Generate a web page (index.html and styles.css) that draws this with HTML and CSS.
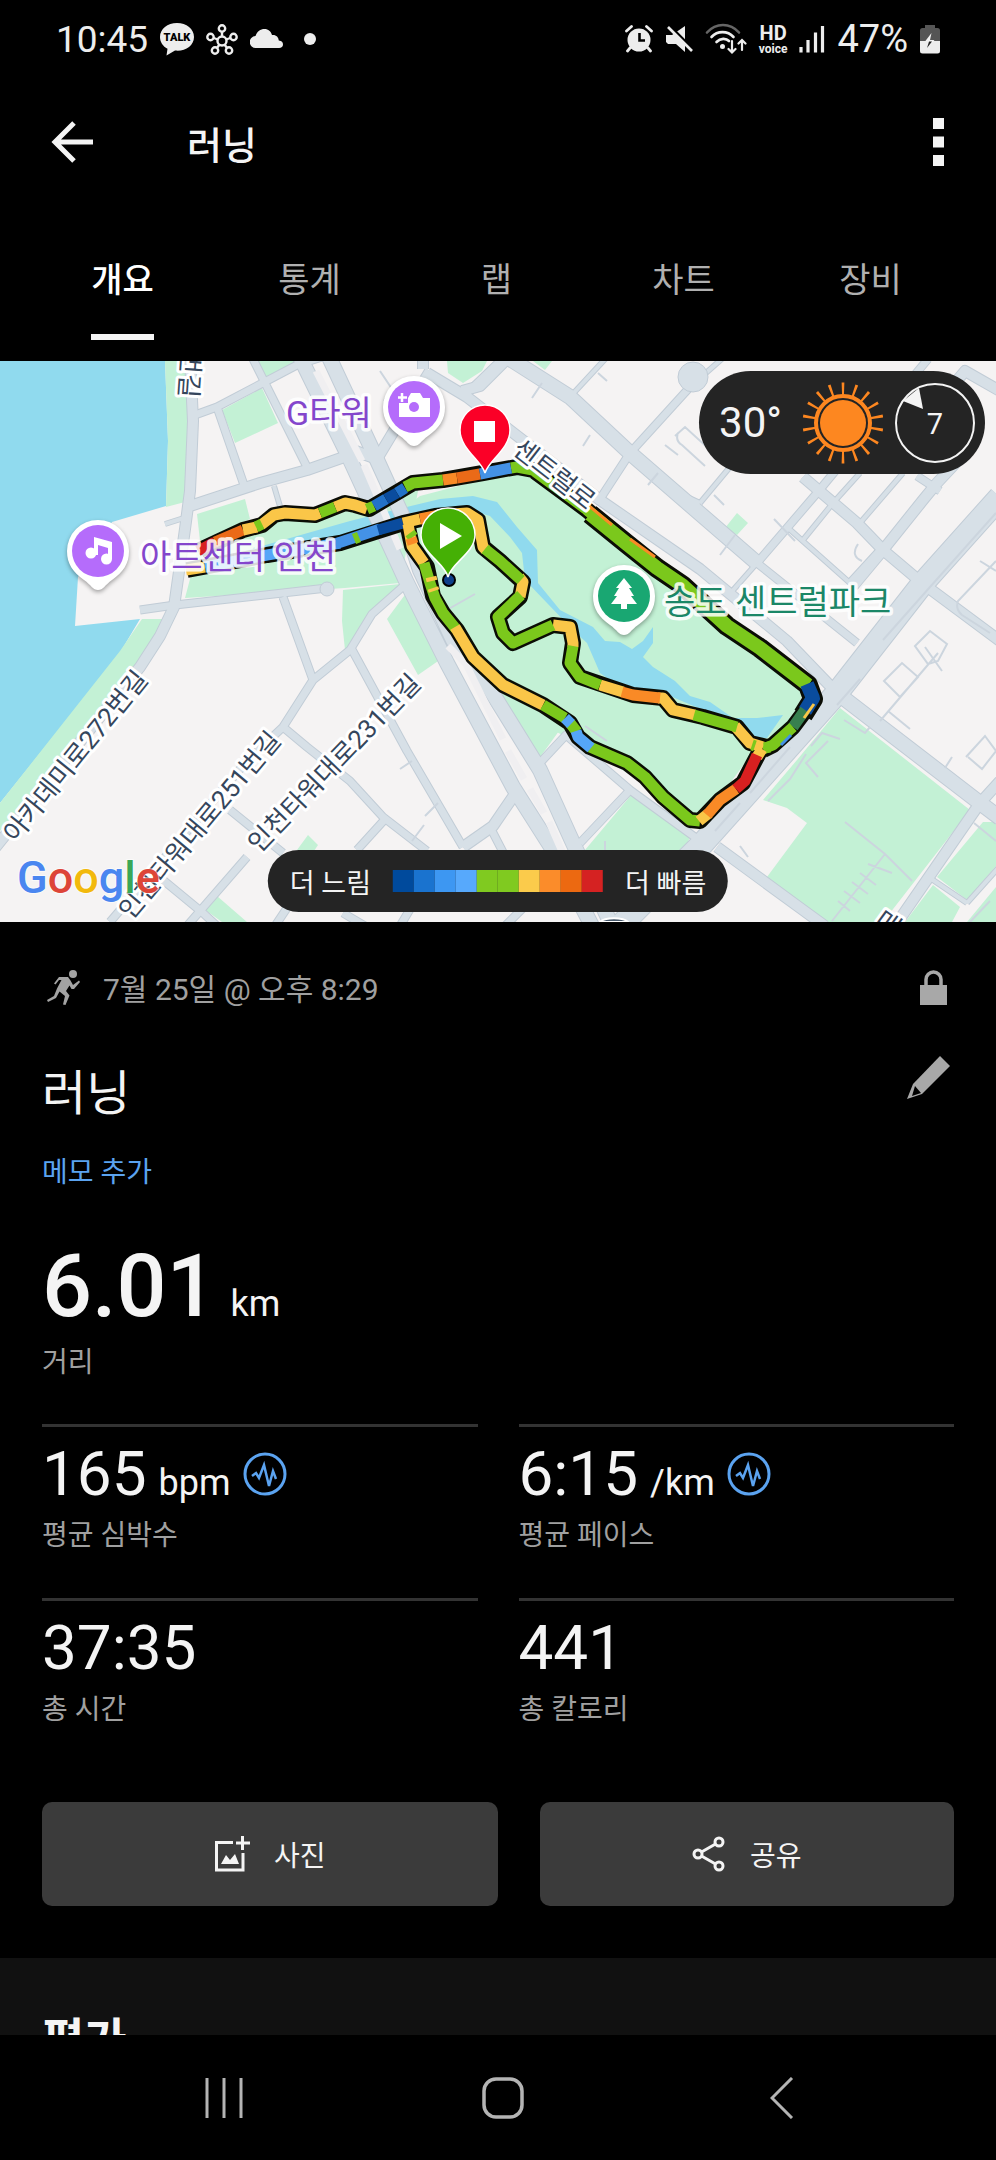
FILE: index.html
```html
<!DOCTYPE html>
<html lang="ko">
<head>
    <meta charset="UTF-8">
    <meta name="viewport" content="width=device-width, initial-scale=1.0">
    <title>러닝</title>
    <link rel="stylesheet" href="styles.css">
</head>
<body>
    <div class="status-bar">
        <div class="status-left">
            <span class="clock">10:45</span>
            <svg class="talk-icon" width="34" height="33" viewBox="0 0 34 33">
                <path d="M17 0C7.500 0 0 6 0 14c0 5 3 9.500 7.500 11.800L6.500 32.500l8.500-5c9.800 1.200 19-4.500 19-13.500C34 6 26.500 0 17 0z" fill="#ededed"/>
                <text x="17" y="18" text-anchor="middle">TALK</text>
            </svg>
            <svg width="32" height="31" viewBox="0 0 32 31" fill="none" stroke="#ededed" stroke-width="2.400">
                <circle cx="16" cy="17" r="4.500"/><circle cx="16" cy="4.500" r="3.200"/><circle cx="4.500" cy="13" r="3.200"/><circle cx="27.500" cy="13" r="3.200"/><circle cx="9" cy="26.500" r="3.200"/><circle cx="23" cy="26.500" r="3.200"/>
                <path d="M16 8v4.500M7.800 14l4 1.500M24.200 14l-4 1.500M11 24l2.500-3.500M21 24l-2.500-3.500"/>
            </svg>
            <svg width="34" height="20" viewBox="0 0 34 20"><path d="M6 19a6 6 0 0 1-.5-12C7 2.500 10.500 0 14.500 0c3.800 0 6.500 2.500 7.500 6 4-.5 6.500 2 6.800 5.500 3 .3 4.200 2 4.200 4S31.500 19 29 19z" fill="#ededed"/></svg>
            <span class="dot"></span>
        </div>
        <div class="status-right">
            <svg width="28" height="28" viewBox="0 0 28 28">
                <circle cx="14" cy="15" r="11.500" fill="#ededed"/>
                <path d="M1.500 6l5-4.500M26.500 6l-5-4.500M5 23l-2.500 3M23 23l2.500 3" stroke="#ededed" stroke-width="2.800" stroke-linecap="round"/>
                <path d="M14.500 8v7.500h5.500" fill="none" stroke="#000" stroke-width="2.600"/>
            </svg>
            <svg width="28" height="28" viewBox="0 0 28 28">
                <path d="M1 10h6l13-9v26L11 19H3l-2-2z" fill="#ededed"/>
                <path d="M1 -2l28 28" stroke="#000" stroke-width="4"/>
                <path d="M3 2l24 24" stroke="#ededed" stroke-width="2.600"/>
            </svg>
            <svg width="42" height="32" viewBox="0 0 42 32" fill="none" stroke="#ededed" stroke-width="2.600" stroke-linecap="round">
                <path d="M2 9.500C11-.5 25-.5 34 9.500" stroke="#666"/>
                <path d="M6.500 14c6-6.500 16-6.500 22 0M11.500 19c4-4 9.500-4 12.500-1"/>
                <circle cx="17.500" cy="23.500" r="1.200" fill="#ededed"/>
                <path d="M27 18v11M23.500 26l3.500 3.500 3.500-3.500M37 27V17M33.500 20.500l3.500-3.500 3.500 3.500" stroke-width="2.200"/>
            </svg>
            <span class="hd"><b>HD</b><i>voice</i></span>
            <svg width="26" height="28" viewBox="0 0 26 28" stroke="#ededed" stroke-width="3.200"><path d="M2 22v5.500M9 15v12.500M16.500 7.500v20M23.500 1v26.500"/></svg>
            <span class="battery-text">47%</span>
            <svg width="20" height="29" viewBox="0 0 20 29">
                <path d="M5 0h10v3h2.500A2.500 2.500 0 0 1 20 5.500V17H0V5.500A2.500 2.500 0 0 1 2.500 3H5z" fill="#555"/>
                <path d="M0 16h20v10a2.500 2.500 0 0 1-2.500 2.500h-15A2.500 2.500 0 0 1 0 26z" fill="#ededed"/>
                <path d="M11.500 8L5 16.500h4L7 23l7.500-8h-4.500z" fill="#f4f4f4"/>
                <path d="M12 16.500L7 23l2-6.500z" fill="#222"/>
            </svg>
        </div>
    </div>

    <header class="app-bar">
        <button class="icon-button" aria-label="뒤로">
            <svg width="43" height="42" viewBox="0 0 43 42" fill="none" stroke="#f4f4f4" stroke-width="5"><path d="M23 2L4 21l19 19M4 21h38"/></svg>
        </button>
        <h1>러닝</h1>
        <button class="icon-button" aria-label="메뉴">
            <svg width="12" height="48" viewBox="0 0 12 48" fill="#f4f4f4"><path d="M0 0h11v11H0zM0 18.500h11v11H0zM0 37h11v11H0z"/></svg>
        </button>
    </header>

    <nav class="tabs">
        <a href="#" class="active">개요</a>
        <a href="#">통계</a>
        <a href="#">랩</a>
        <a href="#">차트</a>
        <a href="#">장비</a>
    </nav>

    <main>
        <div class="map">
            <svg class="map-canvas" viewBox="0 0 996 561">
                <defs>
                    <g id="roads">
                        <g class="w5">
                            <path d="M570 36L607 -4M727 236L757 202M700 142L730 106M787 166L850 222M833 142L803 179M833 142L860 112M860 162L903 112M803 116L833 144M670 128L700 142M930 517L967 542M967 542L1000 505M274 125L282 152M165 163L187 156M467 30L500 -2M690 26L724 -4"/>
                        </g>
                        <g class="w8">
                            <path d="M195 54L217 46 297 4 322 -4M217 46L245 127M253 -2L307 106M140 249L175 244 327 227M283 236L313 319 350 289 372 253 407 222M313 319L283 366 247 400 110 561M283 366L307 386 350 420 383 456 427 490M230 449L283 492M247 496L187 565M163 519L203 552 217 565M350 285L407 390 463 486M387 456L357 489M490 466L505 495M580 482L630 429M538 404L566 374 630 429 703 482M757 202L857 282M757 202L817 132 928 -2M630 92L600 138M630 92L690 26 705 8M850 222L883 186M917 115L940 130M295 535L275 565M343 552L365 565M415 540L400 565M525 545L505 565"/>
                        </g>
                        <g class="w11">
                            <path d="M190 -4L193 60 190 130 185 168 174 246 160 275 140 306 -5 487M190 145L260 122 307 109 347 95M427 12L467 36 600 139 700 208 787 280 837 332M377 98L350 88M377 98L430 10M423 -4V8M463 486L493 465 517 430M803 116L857 162 883 189 922 222 1000 280M883 189L923 139 937 122 965 92M853 225L883 189M717 486L803 549 825 565M980 442L895 565M980 442L1000 420M940 40L965 10 1000 30M505 0L480 25 462 30"/>
                        </g>
                        <g class="w15">
                            <path d="M300 -4L347 92 407 222 447 302 513 426 553 489 592 565M329 -4L377 99 403 156 420 209 453 279 480 312 540 409 573 482 612 565M507 -4L570 36 630 92 757 202M837 332L980 442 1000 457"/>
                        </g>
                        <g class="w22">
                            <path d="M620 565L703 482 837 332 923 222 1000 136"/>
                        </g>
                    </g>
                </defs>
                <rect width="996" height="561" fill="#f5f3f3"/>

                <!-- water -->
                <path class="water" d="M0 0H165L168 80 166 145 112 161 78 216 75 265 140 258 118 295 0 442z"/>

                <!-- parks -->
                <g class="park">
                    <path d="M165 0H190L190 60 185 141 166 146 168 80zM142 258H168L160 274 137 309 0 470V442L120 290z"/>
                    <path d="M258 0H298L266 16zM222 49L262 27 278 62 235 82zM447 0H487L482 10 463 22 448 12zM533 0H552L545 9z"/>
                    <path d="M197 153L245 138 250 158 200 180zM200 180L280 160 350 145 420 120 400 222 345 227 185 237z"/>
                    <path d="M343 229L400 223 367 257 352 282 345 289 342 260zM407 231L420 245 441 298 418 314 387 258z"/>
                    <path d="M400 150L420 135 520 109 680 222 805 327 790 366 750 395 703 459 600 395 510 345 455 265 405 165z"/>
                    <path d="M498 326L530 345 559 370 538 399zM632 433L690 476 676 510H600L585 489z"/>
                    <path d="M840 347L970 449 883 561H823L767 516 807 462 787 447 763 439 797 399z"/>
                    <path d="M983 461H996V505L967 539 937 516zM933 524L960 546 952 561H905zM967 561L996 526V561zM737 152L748 162 737 174 725 167zM308 474L318 484 310 496 297 489zM217 535L247 561H222L204 548zM347 269L352 282 345 276z"/>
                </g>
                <path class="water" d="M213 199L350 160 390 150 440 138 473 135 497 141 517 166 537 189 538 222 560 249 593 266 605 280 620 281 632 288 643 280 653 266 653 282 643 296 653 306 675 320 690 335 710 341 733 357 757 357 783 354 767 377 743 376 733 362 703 349 663 332 627 331 600 312 587 282 573 269 547 242 525 219 522 192 510 176 490 155 473 150 400 165 340 183 215 212z"/>

                <use href="#roads" class="road-case"/>
                <use href="#roads" class="road"/>
                <circle cx="327" cy="228" r="7" class="plaza"/>
                <circle cx="693" cy="16" r="15" class="plaza"/>

                <!-- centre strips of the wide avenues -->
                <g class="strip">
                    <path d="M316 10L362 100M364 104L400 188M448 285L466 303 503 378M508 390L524 418M530 428L544 452M549 461L575 520"/>
                </g>
                <g class="thin">
                    <path d="M883 279L930 226 996 152M837 344L860 318M715 470L740 442M750 432L790 386M380 10L392 28 384 40M678 72Q675 80 682 84L705 105M675 75L685 66 720 98M735 174L720 194M774 158L795 180M714 134L724 144M858 183Q850 195 862 200M996 200L958 240Q955 248 962 254L990 272M990 540L950 582M980 200L996 210M915 285L930 270 947 283 938 300 928 303zM884 320L902 302 918 316 900 336zM880 360L938 292M925 286L942 310M966 396L985 375 996 390M968 396L982 408 996 390M945 407L952 396M844 359L865 372 870 366M811 385L822 372 840 378M806 393L790 418 768 440M828 380L806 402 818 416M845 461L885 493 912 520M885 493L832 560M838 540L850 550M844 530L860 542M852 521L868 533M860 512L876 524M868 503L892 512M888 350L910 368M974 462L996 480M740 485L748 496M605 520V480M532 37L542 22M583 85L590 74M598 12L607 20M648 124L658 112M665 84L678 94M400 408L412 400M425 455L438 442M412 480L424 464M445 250L475 233M585 365L607 380"/>
                </g>

                <!-- track: dark casing first, then pace-coloured pieces -->
                <g class="track-case">
                    <path d="M200 189L243 169 262 164 274 154 285 152 315 154 345 142 355 144 369 148 413 122 443 119 483 112 517 106 533 109 587 149 627 182 657 206 682 224 727 266 765 290 808 324 814 338 793 366 773 384 763 389"/>
                    <path class="wide" d="M590 153L627 183 657 207 682 224 727 265 760 287 808 324 813 338 803 354"/>
                    <path d="M187 209L267 194 340 182 403 162 435 155 467 152 478 159 483 186 500 200 523 221 520 236 498 256 503 272 513 282 553 264 570 266 573 282 570 302 580 316 633 334 663 337 673 349 703 356 737 366 750 382 767 386"/>
                    <path d="M407 162L412 185 427 206 433 235 443 252 457 269 473 296 503 324 543 344 570 362 578 376 590 386 627 402 645 416 663 436 690 459 700 460 720 439 743 422 760 390"/>
                </g>
                <g class="track">
                    <path class="p-green" d="M587 149L627 182 657 206 682 224 727 266 765 290 808 324"/>
                    <path class="p-green wide" d="M590 153L627 183 657 207 682 224 727 265 760 287 808 324"/>
                    <path class="p-red" d="M198 190L215 181"/><path class="p-dorange" d="M215 181L243 169"/>
                    <path class="p-yellow" d="M243 169L257 166M261 164L274 154 285 152 315 154 320 152M335 146L345 142 355 144 367 148M186 209L205 206"/>
                    <path class="p-green" d="M256 166L262 163M320 152L335 146M367 148L374 145M405 126L413 122 443 119M511 107L517 106 533 109 590 151"/>
                    <path class="p-blue" d="M374 145L386 138M397 132L405 127"/><path class="p-navy" d="M386 138L397 132"/>
                    <path class="p-orange" d="M443 119L457 117"/><path class="p-dorange" d="M457 117L480 113"/>
                    <path class="p-lblue" d="M480 113L511 107"/>
                    <path class="p-navy wide" d="M807 323L813 337 805 350"/><path class="p-teal" d="M805 349L793 366"/>
                    <path class="p-green" d="M793 366L773 384 763 388"/>
                    <path class="p-yellow thin-line" d="M814 343L804 357"/><path class="p-lblue thin-line" d="M791 374L781 384"/>
                    <path class="p-orange thin-line" d="M588 144L612 164M630 178L655 196"/>
                    <path class="p-sky" d="M205 206L267 194 340 182"/><path class="p-lblue" d="M335 183L380 168"/>
                    <path class="p-green" d="M354 178L359 176"/><path class="p-navy" d="M378 169L403 162"/>
                    <path class="p-yellow" d="M403 162L420 158"/><path class="p-orange" d="M420 158L440 154"/>
                    <path class="p-yellow" d="M440 154L467 152 478 159 483 186 486 189M519 216L523 221 520 236M553 264L570 266 573 282 573 286M600 324L623 331M658 337L663 337 673 349 695 354M735 365L750 382 763 386"/>
                    <path class="p-green" d="M485 188L500 200 521 219M521 234L498 256 503 272 513 282 553 264M573 285L570 302 580 316 600 324M694 354L737 366M752 384L755 385"/>
                    <path class="p-orange" d="M622 331L633 334 660 337"/>
                    <path class="p-yellow" d="M408 163L412 185 424 202"/><path class="p-green" d="M410 172L413 176M424 202L430 222 435 237 443 252 456 268M764 387L770 386"/>
                    <path class="p-orange" d="M411 177L413 183"/>
                    <path class="p-yellow" d="M455 266L473 296 503 324 543 344M431 216L432 220M433 227L434 230"/>
                    <path class="p-green" d="M543 344L565 357M570 362L577 371M590 386L627 402 645 416 663 436 690 459 700 460"/>
                    <path class="p-sky" d="M565 357L571 363M576 370L578 376 591 387"/>
                    <path class="p-yellow" d="M699 460L709 452M762 388L757 396"/><path class="p-orange" d="M707 454L720 439 736 428"/>
                    <path class="p-red" d="M736 428L745 420 757 394"/>
                </g>
                <circle cx="449" cy="219" r="6" fill="#0f3f8a" stroke="#000" stroke-width="2"/>

                <!-- street names -->
                <g class="street">
                    <text transform="translate(179 36) rotate(94)" text-anchor="end">272번길</text>
                    <text transform="translate(16 483) rotate(-51)">아카데미로272번길</text>
                    <text transform="translate(131 560) rotate(-50)">인천타워대로251번길</text>
                    <text transform="translate(259 493) rotate(-46)">인천타워대로231번길</text>
                    <text transform="translate(511 91) rotate(38)">센트럴로</text>
                    <text transform="translate(873 563) rotate(36)">매소홀로</text>
                </g>
                <g class="place">
                    <text x="286" y="64">G타워</text>
                    <text x="140" y="208">아트센터 인천</text>
                    <text x="664" y="253" class="green">송도 센트럴파크</text>
                </g>

                <!-- place pins -->
                <g class="pin" transform="translate(98 190)">
                    <path d="M0 39C-5 39-7 34-14 29C-25 21-31 13-31 0a31 31 0 1 1 62 0C31 13 25 21 14 29C7 34 5 39 0 39z"/>
                    <circle r="26" fill="#b56cfb"/>
                    <path d="M-4-14L14-9V8H10V-3L0-6V4H-4z" fill="#fff"/><circle cx="-7" cy="2" r="5.500" fill="#fff"/><circle cx="8.500" cy="8" r="5.500" fill="#fff"/>
                </g>
                <g class="pin" transform="translate(414 46)">
                    <path d="M0 39C-5 39-7 34-14 29C-25 21-31 13-31 0a31 31 0 1 1 62 0C31 13 25 21 14 29C7 34 5 39 0 39z"/>
                    <circle r="26" fill="#b56cfb"/>
                    <path d="M-15-4h9v-5l3-5H6l3 5h7V10h-31z" fill="#fff"/><circle r="5" fill="#b56cfb"/>
                    <path d="M-12-14v9M-16-9.500h9" stroke="#fff" stroke-width="2.500"/>
                </g>
                <g class="pin" transform="translate(624 235)">
                    <path d="M0 39C-5 39-7 34-14 29C-25 21-31 13-31 0a31 31 0 1 1 62 0C31 13 25 21 14 29C7 34 5 39 0 39z"/>
                    <circle r="26" fill="#19a772"/>
                    <path d="M0-18L8-8H5L10 0H7L13 8H3V13H-3V8H-13L-7 0H-10L-5-8H-8z" fill="#fff"/>
                </g>
                <path d="M485 112C482 100 460 88 460 69a25 25 0 0 1 50 0C510 88 488 100 485 112z" fill="#fb0027" stroke="#fff" stroke-width="1.500"/>
                <rect x="474" y="60" width="21" height="21" fill="#fff"/>
                <path d="M448 216C445 202 421 192 421 174a27 27 0 0 1 54 0C475 192 451 202 448 216z" fill="#45b005" stroke="#fff" stroke-width="1.500"/>
                <path d="M440 162L462 175 440 188z" fill="#fff"/>

                <text class="google" x="17" y="532"><tspan fill="#4a86f0">G</tspan><tspan fill="#dd4538">o</tspan><tspan fill="#f2b90c">o</tspan><tspan fill="#4a86f0">g</tspan><tspan fill="#3aa757">l</tspan><tspan fill="#dd4538">e</tspan></text>
                <path d="M600 561A15 6 0 0 1 628 561z" fill="#46586a" stroke="#fff" stroke-width="2"/>
            </svg>

            <div class="weather">
                <span class="temp">30°</span>
                <svg width="82" height="82" viewBox="-41 -41 82 82" fill="none" stroke="#fd8720">
                    <circle r="23" fill="#fd8720" stroke="none"/>
                    <circle r="27" stroke-width="4"/>
                    <!-- 18 rays -->
                    <circle r="34" stroke-width="13" pathLength="180" stroke-dasharray="2 8" stroke-dashoffset="-4"/>
                </svg>
                <svg width="80" height="80" viewBox="-40 -40 80 80">
                    <circle r="39" fill="none" stroke="#f4f4f4" stroke-width="2"/>
                    <path d="M-32-22L-16-35-12-14z" fill="#f4f4f4"/>
                    <text class="wind" y="11" text-anchor="middle">7</text>
                </svg>
            </div>

            <div class="legend">
                <span>더 느림</span>
                <div class="scale">
                    <i class="s1"></i><i class="s2"></i><i class="s3"></i><i class="s4"></i><i class="s5"></i><i class="s5"></i><i class="s6"></i><i class="s7"></i><i class="s8"></i><i class="s9"></i>
                </div>
                <span>더 빠름</span>
            </div>
        </div>

        <section class="details">
            <div class="meta">
                <svg width="33" height="35" viewBox="0 0 33 35">
                    <circle cx="26" cy="4" r="4" fill="#a3a3a3"/>
                    <path d="M12 7l9 0 2.500 3.500L26 15l6-4.500L33 12l-6 7h-2.500l-2-3.500-3.500 5.500 3.500 4.500-4 9.500-2.500-.5 2-8.500-5.500-4.500L9 28l-8 4-1-2 7-4 3-7.500 4.500-8.500H12l-3.500 4.500-1.500-1z" fill="#a3a3a3"/>
                </svg>
                <span class="date">7월 25일 @ 오후 8:29</span>
                <svg width="28" height="35" viewBox="0 0 28 35"><path d="M0 15h27v20H0z" fill="#a8a8a8"/><path d="M6 16V9.500a7.500 7.500 0 0 1 15 0V16" fill="none" stroke="#a8a8a8" stroke-width="3.500"/></svg>
            </div>

            <div class="title-row">
                <h2>러닝</h2>
                <button class="icon-button" aria-label="편집">
                    <svg width="44" height="44" viewBox="0 0 44 44"><path d="M33 0l10 10-28 28L0 43l6-15z" fill="#a8a8a8"/><path d="M8 30l6 7-9 3z" fill="#000"/></svg>
                </button>
            </div>
            <a href="#" class="memo">메모 추가</a>

            <div class="distance"><strong>6.01</strong><span>km</span></div>
            <div class="label">거리</div>

            <div class="stats">
                <div class="stat">
                    <div class="value">165 <span>bpm</span>
                        <svg width="44" height="44" viewBox="0 0 44 44" fill="none" stroke="#5ba3f0" stroke-width="3"><circle cx="22" cy="22" r="20"/><path d="M9 24l4-3 3 5 5-13 5 21 4-15 3 8" stroke-width="2.500"/></svg>
                    </div>
                    <div class="label">평균 심박수</div>
                </div>
                <div class="stat">
                    <div class="value">6:15 <span>/km</span>
                        <svg width="44" height="44" viewBox="0 0 44 44" fill="none" stroke="#5ba3f0" stroke-width="3"><circle cx="22" cy="22" r="20"/><path d="M9 24l4-3 3 5 5-13 5 21 4-15 3 8" stroke-width="2.500"/></svg>
                    </div>
                    <div class="label">평균 페이스</div>
                </div>
                <div class="stat">
                    <div class="value">37:35</div>
                    <div class="label">총 시간</div>
                </div>
                <div class="stat">
                    <div class="value">441</div>
                    <div class="label">총 칼로리</div>
                </div>
            </div>

            <div class="actions">
                <button>
                    <svg width="36" height="36" viewBox="0 0 36 36" fill="none" stroke="#f4f4f4" stroke-width="3"><path d="M19 6.500H2.500V34H29V17M28.500 0v14M22 7h14"/><path d="M7 28l5-9 4 5 5-6 4 10z" fill="#f4f4f4" stroke="none"/></svg>
                    사진
                </button>
                <button>
                    <svg width="34" height="36" viewBox="0 0 34 36" fill="none" stroke="#f4f4f4" stroke-width="3"><circle cx="6" cy="18" r="4"/><circle cx="27" cy="6" r="4"/><circle cx="27" cy="30" r="4"/><path d="M9.500 16L23.500 8M9.500 20l14 8"/></svg>
                    공유
                </button>
            </div>
        </section>

        <section class="rating">
            <h2>평가</h2>
        </section>
    </main>

    <div class="nav-bar">
        <button aria-label="최근 앱"><svg width="38" height="40" viewBox="0 0 38 40" stroke="#b4b4b4" stroke-width="3"><path d="M2 0v40M19 0v40M36 0v40"/></svg></button>
        <button aria-label="홈"><svg width="42" height="42" viewBox="0 0 42 42" fill="none" stroke="#b4b4b4" stroke-width="3.500"><rect x="2" y="2" width="38" height="38" rx="12"/></svg></button>
        <button aria-label="뒤로"><svg width="24" height="42" viewBox="0 0 24 42" fill="none" stroke="#b4b4b4" stroke-width="3"><path d="M22 1L2 21l20 20"/></svg></button>
    </div>
</body>
</html>
```
FILE: styles.css
```css
* {
    box-sizing: border-box;
}

body {
    margin: 0;
    height: 100vh;
    display: flex;
    flex-direction: column;
    background: #000;
    color: #f4f4f4;
    font-family: Roboto, "Noto Sans CJK KR", sans-serif;
}

h1, h2 {
    margin: 0;
}

svg {
    display: block;
    flex: none;
}

a {
    color: inherit;
    text-decoration: none;
}

button {
    border: none;
    background: none;
    color: inherit;
    font: inherit;
    padding: 0;
    cursor: pointer;
}

/* status bar */
.status-bar {
    flex: none;
    height: 78px;
    padding: 0 56px;
    display: flex;
    justify-content: space-between;
    align-items: center;
    color: #ededed;
}

.status-left,
.status-right {
    display: flex;
    align-items: center;
    gap: 12px;
}

.clock {
    font-size: 37px;
}

.battery-text {
    font-size: 38px;
}

.talk-icon text {
    font-size: 11px;
    font-weight: 900;
    fill: #000;
}

.dot {
    width: 12px;
    height: 12px;
    margin-left: 8px;
    border-radius: 50%;
    background: #ededed;
}

.hd {
    display: flex;
    flex-direction: column;
    align-items: center;
}

.hd b {
    font-size: 20px;
    line-height: 20px;
}

.hd i {
    font-size: 12px;
    font-style: normal;
    font-weight: 700;
    line-height: 12px;
}

/* app bar */
.app-bar {
    flex: none;
    height: 126px;
    padding: 2px 51px 0;
    display: flex;
    align-items: center;
}

.app-bar h1 {
    flex: 1;
    margin-left: 93px;
    font-size: 38px;
    font-weight: 500;
}

.tabs {
    flex: none;
    display: grid;
    grid-template-columns: repeat(5, 1fr);
    justify-items: center;
    padding: 0 32px 21px 29px;
    color: #b0b0b0;
    font-size: 34px;
    line-height: 44px;
}

.tabs a {
    padding: 54px 0 32px;
    border-bottom: 6px solid transparent;
}

.tabs .active {
    color: #fff;
    font-weight: 500;
    border-color: #f4f4f4;
}

main {
    flex: 1;
    min-height: 0;
    overflow: hidden;
}

/* map */
.map {
    position: relative;
}

.map-canvas {
    width: 100%;
    height: auto;
}

.water {
    fill: #90daee;
}

.park {
    fill: #c3f1d5;
}

.road-case,
.road {
    fill: none;
    stroke-linejoin: round;
}

.road-case {
    --edge: 1px;
    stroke: #c1ccd6;
}

.road {
    --edge: -1px;
    stroke: #d7e0e7;
}

.w5 {
    stroke-width: calc(5px + var(--edge));
}

.w8 {
    stroke-width: calc(8px + var(--edge));
}

.w11 {
    stroke-width: calc(11px + var(--edge));
}

.w15 {
    stroke-width: calc(15px + var(--edge));
}

.w22 {
    stroke-width: calc(23px + var(--edge));
}

.plaza {
    fill: #d7e0e7;
    stroke: #c1ccd6;
}

.strip {
    fill: none;
    stroke: #f0eff1;
    stroke-width: 7px;
}

.thin {
    fill: none;
    stroke: #ccd5de;
    stroke-width: 2px;
}

.track-case,
.track {
    fill: none;
    stroke-linejoin: round;
}

.track-case {
    stroke: #0b0d05;
    stroke-width: 16px;
}

.track {
    stroke-width: 11px;
}

.track-case .wide {
    stroke-width: 20px;
}

.track .wide {
    stroke-width: 14px;
}

.track .thin-line {
    stroke-width: 3px;
}

.p-navy { stroke: #0a4c9e; }
.p-blue { stroke: #2372c8; }
.p-lblue { stroke: #4492e6; }
.p-sky { stroke: #55a6f8; }
.p-teal { stroke: #37804f; }
.p-green { stroke: #7bc81c; }
.p-yellow { stroke: #fac648; }
.p-orange { stroke: #f98a26; }
.p-dorange { stroke: #ea6a18; }
.p-red { stroke: #d82020; }

.street text,
.place text {
    paint-order: stroke;
    stroke: #fff;
    stroke-linejoin: round;
}

.street text {
    font-size: 26px;
    fill: #35465c;
    stroke-width: 6px;
}

.place text {
    font-size: 34px;
    fill: #8446cc;
    stroke-width: 7px;
    stroke-opacity: 0.85;
}

.place .green {
    fill: #1b8767;
}

.pin {
    filter: drop-shadow(0 2px 2px rgba(0, 0, 0, 0.35));
}

.pin path:first-child {
    fill: #fff;
}

.google {
    font-size: 45px;
    font-weight: 500;
    paint-order: stroke;
    stroke: rgba(255, 255, 255, 0.6);
    stroke-width: 2px;
}

.weather,
.legend {
    position: absolute;
    display: flex;
    align-items: center;
    background: #242424;
}

.weather {
    top: 10px;
    right: 11px;
    height: 103px;
    padding: 0 10px 0 20px;
    border-radius: 52px;
}

.temp {
    margin-right: 20px;
    font-size: 42px;
}

.weather svg + svg {
    margin-left: 11px;
}

.wind {
    font-size: 29px;
    fill: #f4f4f4;
}

.legend {
    bottom: 10px;
    left: 50%;
    transform: translateX(-50%);
    height: 62px;
    padding: 0 22px;
    gap: 22px;
    border-radius: 31px;
    font-size: 27px;
    white-space: nowrap;
}

.scale {
    display: flex;
}

.scale i {
    width: 21px;
    height: 22px;
}

.s1 { background: #004a9c; }
.s2 { background: #1a73cf; }
.s3 { background: #3d97f2; }
.s4 { background: #57a9fc; }
.s5 { background: #80ca20; }
.s6 { background: #fbcb4b; }
.s7 { background: #fb8c2a; }
.s8 { background: #ec6911; }
.s9 { background: #d52222; }

/* activity details */
.details {
    padding: 47px 42px 52px;
}

.meta {
    display: flex;
    align-items: center;
    height: 36px;
    padding: 0 6px 0 5px;
    color: #a0a0a0;
    font-size: 30px;
}

.date {
    flex: 1;
    margin-left: 23px;
}

.title-row {
    display: flex;
    justify-content: space-between;
    align-items: flex-start;
    margin-top: 51px;
    padding-right: 3px;
}

.title-row h2 {
    font-size: 48px;
    font-weight: 400;
    line-height: 76px;
}

.memo {
    display: block;
    margin-top: 21px;
    color: #5ba3f0;
    font-size: 28px;
    line-height: 40px;
}

.distance {
    display: flex;
    align-items: baseline;
    gap: 14px;
    margin: 48px 0 12px;
}

.distance strong {
    font-size: 88px;
    font-weight: 500;
    line-height: 90px;
}

.distance span,
.value span {
    font-size: 36px;
    line-height: 40px;
}

.label {
    color: #a0a0a0;
    font-size: 28px;
    line-height: 40px;
}

.stats {
    display: grid;
    grid-template-columns: 1fr 1fr;
    gap: 42px 41px;
    margin-top: 41px;
}

.stat {
    padding-top: 11px;
    border-top: 3px solid #333;
}

.value {
    display: flex;
    align-items: baseline;
    gap: 12px;
    margin-bottom: 6px;
    font-size: 62px;
    line-height: 72px;
}

.value svg {
    align-self: center;
}

.actions {
    display: grid;
    grid-template-columns: 11fr 10fr;
    gap: 42px;
    margin-top: 72px;
}

.actions button {
    height: 104px;
    display: flex;
    justify-content: center;
    align-items: center;
    gap: 24px;
    border-radius: 10px;
    background: #3b3b3b;
    font-size: 28px;
}

.rating {
    padding: 52px 42px;
    background: #111;
}

.rating h2 {
    font-size: 46px;
    font-weight: 700;
    line-height: 60px;
}

/* system navigation */
.nav-bar {
    flex: none;
    height: 125px;
    padding: 0 74px 0 84px;
    display: grid;
    grid-template-columns: repeat(3, 1fr);
}

.nav-bar button {
    display: flex;
    justify-content: center;
    align-items: center;
}
```
